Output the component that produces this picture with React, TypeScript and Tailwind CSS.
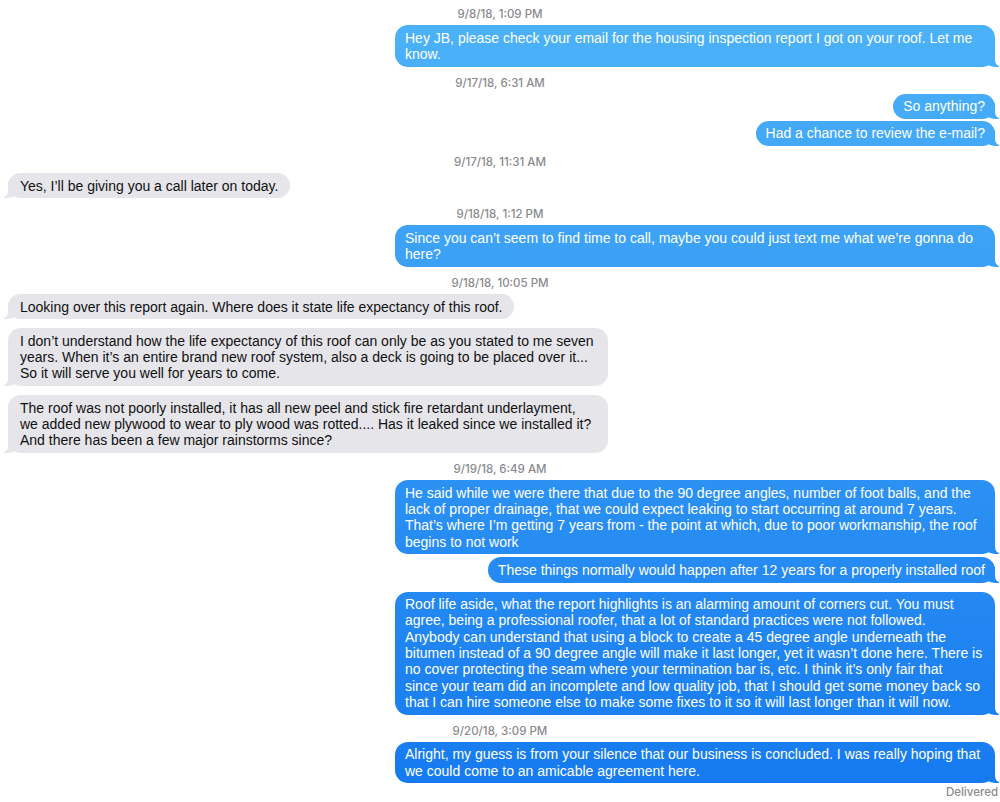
import React from 'react';

// iMessage-style transcript, outgoing bubbles share one viewport-fixed gradient
const BLUE = 'bg-fixed bg-linear-to-b from-[#4db3f8] to-[#1479ef]';

function Stamp({ text }: { text: string }) {
    return (
        <div
            className="mt-[9px] mb-[4px] h-[14px] text-center text-[11.5px] leading-[14px] font-medium text-[#8a8a8f]"
            style={{ fontFamily: 'Inter, "Liberation Sans", sans-serif' }}
        >
            {text}
        </div>
    );
}

interface BubbleProps {
    lines: string[];
    wide?: boolean;
    className?: string;
}

function Out({ lines, wide, className = '' }: BubbleProps) {
    return (
        <div className={`relative self-end mr-[5px] ${className}`}>
            <div className={`absolute bottom-0 -right-[4px] w-[16px] h-[16px] rounded-bl-[12px_10px] ${BLUE}`} />
            <div className="absolute bottom-0 -right-[14px] w-[14px] h-[16px] rounded-bl-[7px] bg-white" />
            <div className={`relative rounded-[13px] px-[10px] py-[4.5px] text-white ${BLUE} ${wide ? 'w-[600px]' : ''}`}>
                {lines.map((l, i) => (
                    <div key={i} className="whitespace-nowrap">{l}</div>
                ))}
            </div>
        </div>
    );
}

function In({ lines, wide, className = '' }: BubbleProps) {
    return (
        <div className={`relative self-start ml-[8px] ${className}`}>
            <div className="absolute bottom-0 -left-[4px] w-[16px] h-[16px] rounded-br-[12px_10px] bg-[#e5e5ea]" />
            <div className="absolute bottom-0 -left-[14px] w-[14px] h-[16px] rounded-br-[7px] bg-white" />
            <div className={`relative rounded-[13px] px-[12px] py-[4.5px] text-[#111] bg-[#e5e5ea] ${wide ? 'w-[600px]' : ''}`}>
                {lines.map((l, i) => (
                    <div key={i} className="whitespace-nowrap">{l}</div>
                ))}
            </div>
        </div>
    );
}

export default function App() {
    return (
        <div
            className="w-[1000px] h-[802px] overflow-hidden bg-white flex flex-col text-[14px] leading-[16.3px]"
            style={{ fontFamily: '"Liberation Sans", Arial, sans-serif' }}
        >
            <div className="-mt-[2px]" />
            <Stamp text="9/8/18, 1:09 PM" />
            <Out wide lines={['Hey JB, please check your email for the housing inspection report I got on your roof. Let me', 'know.']} />

            <Stamp text="9/17/18, 6:31 AM" />
            <Out lines={['So anything?']} />
            <Out className="mt-[2px]" lines={['Had a chance to review the e-mail?']} />

            <Stamp text="9/17/18, 11:31 AM" />
            <In lines={['Yes, I\u2019ll be giving you a call later on today.']} />

            <Stamp text="9/18/18, 1:12 PM" />
            <Out wide lines={['Since you can\u2019t seem to find time to call, maybe you could just text me what we\u2019re gonna do', 'here?']} />

            <Stamp text="9/18/18, 10:05 PM" />
            <In lines={['Looking over this report again. Where does it state life expectancy of this roof.']} />
            <In
                wide
                className="mt-[9px]"
                lines={[
                    'I don\u2019t understand how the life expectancy of this roof can only be as you stated to me seven',
                    'years. When it\u2019s an entire brand new roof system, also a deck is going to be placed over it...',
                    'So it will serve you well for years to come.',
                ]}
            />
            <In
                wide
                className="mt-[9px]"
                lines={[
                    'The roof was not poorly installed, it has all new peel and stick fire retardant underlayment,',
                    'we added new plywood to wear to ply wood was rotted.... Has it leaked since we installed it?',
                    'And there has been a few major rainstorms since?',
                ]}
            />

            <Stamp text="9/19/18, 6:49 AM" />
            <Out
                wide
                lines={[
                    'He said while we were there that due to the 90 degree angles, number of foot balls, and the',
                    'lack of proper drainage, that we could expect leaking to start occurring at around 7 years.',
                    'That\u2019s where I\u2019m getting 7 years from - the point at which, due to poor workmanship, the roof',
                    'begins to not work',
                ]}
            />
            <Out className="mt-[3px]" lines={['These things normally would happen after 12 years for a properly installed roof']} />
            <Out
                wide
                className="mt-[9px]"
                lines={[
                    'Roof life aside, what the report highlights is an alarming amount of corners cut. You must',
                    'agree, being a professional roofer, that a lot of standard practices were not followed.',
                    'Anybody can understand that using a block to create a 45 degree angle underneath the',
                    'bitumen instead of a 90 degree angle will make it last longer, yet it wasn\u2019t done here. There is',
                    'no cover protecting the seam where your termination bar is, etc. I think it\u2019s only fair that',
                    'since your team did an incomplete and low quality job, that I should get some money back so',
                    'that I can hire someone else to make some fixes to it so it will last longer than it will now.',
                ]}
            />

            <Stamp text="9/20/18, 3:09 PM" />
            <Out
                wide
                lines={[
                    'Alright, my guess is from your silence that our business is concluded. I was really hoping that',
                    'we could come to an amicable agreement here.',
                ]}
            />
            <div
                className="self-end mr-[2px] mt-[2px] text-[11.5px] leading-[14px] font-medium text-[#8a8a8f]"
                style={{ fontFamily: 'Inter, "Liberation Sans", sans-serif' }}
            >
                Delivered
            </div>
        </div>
    );
}
